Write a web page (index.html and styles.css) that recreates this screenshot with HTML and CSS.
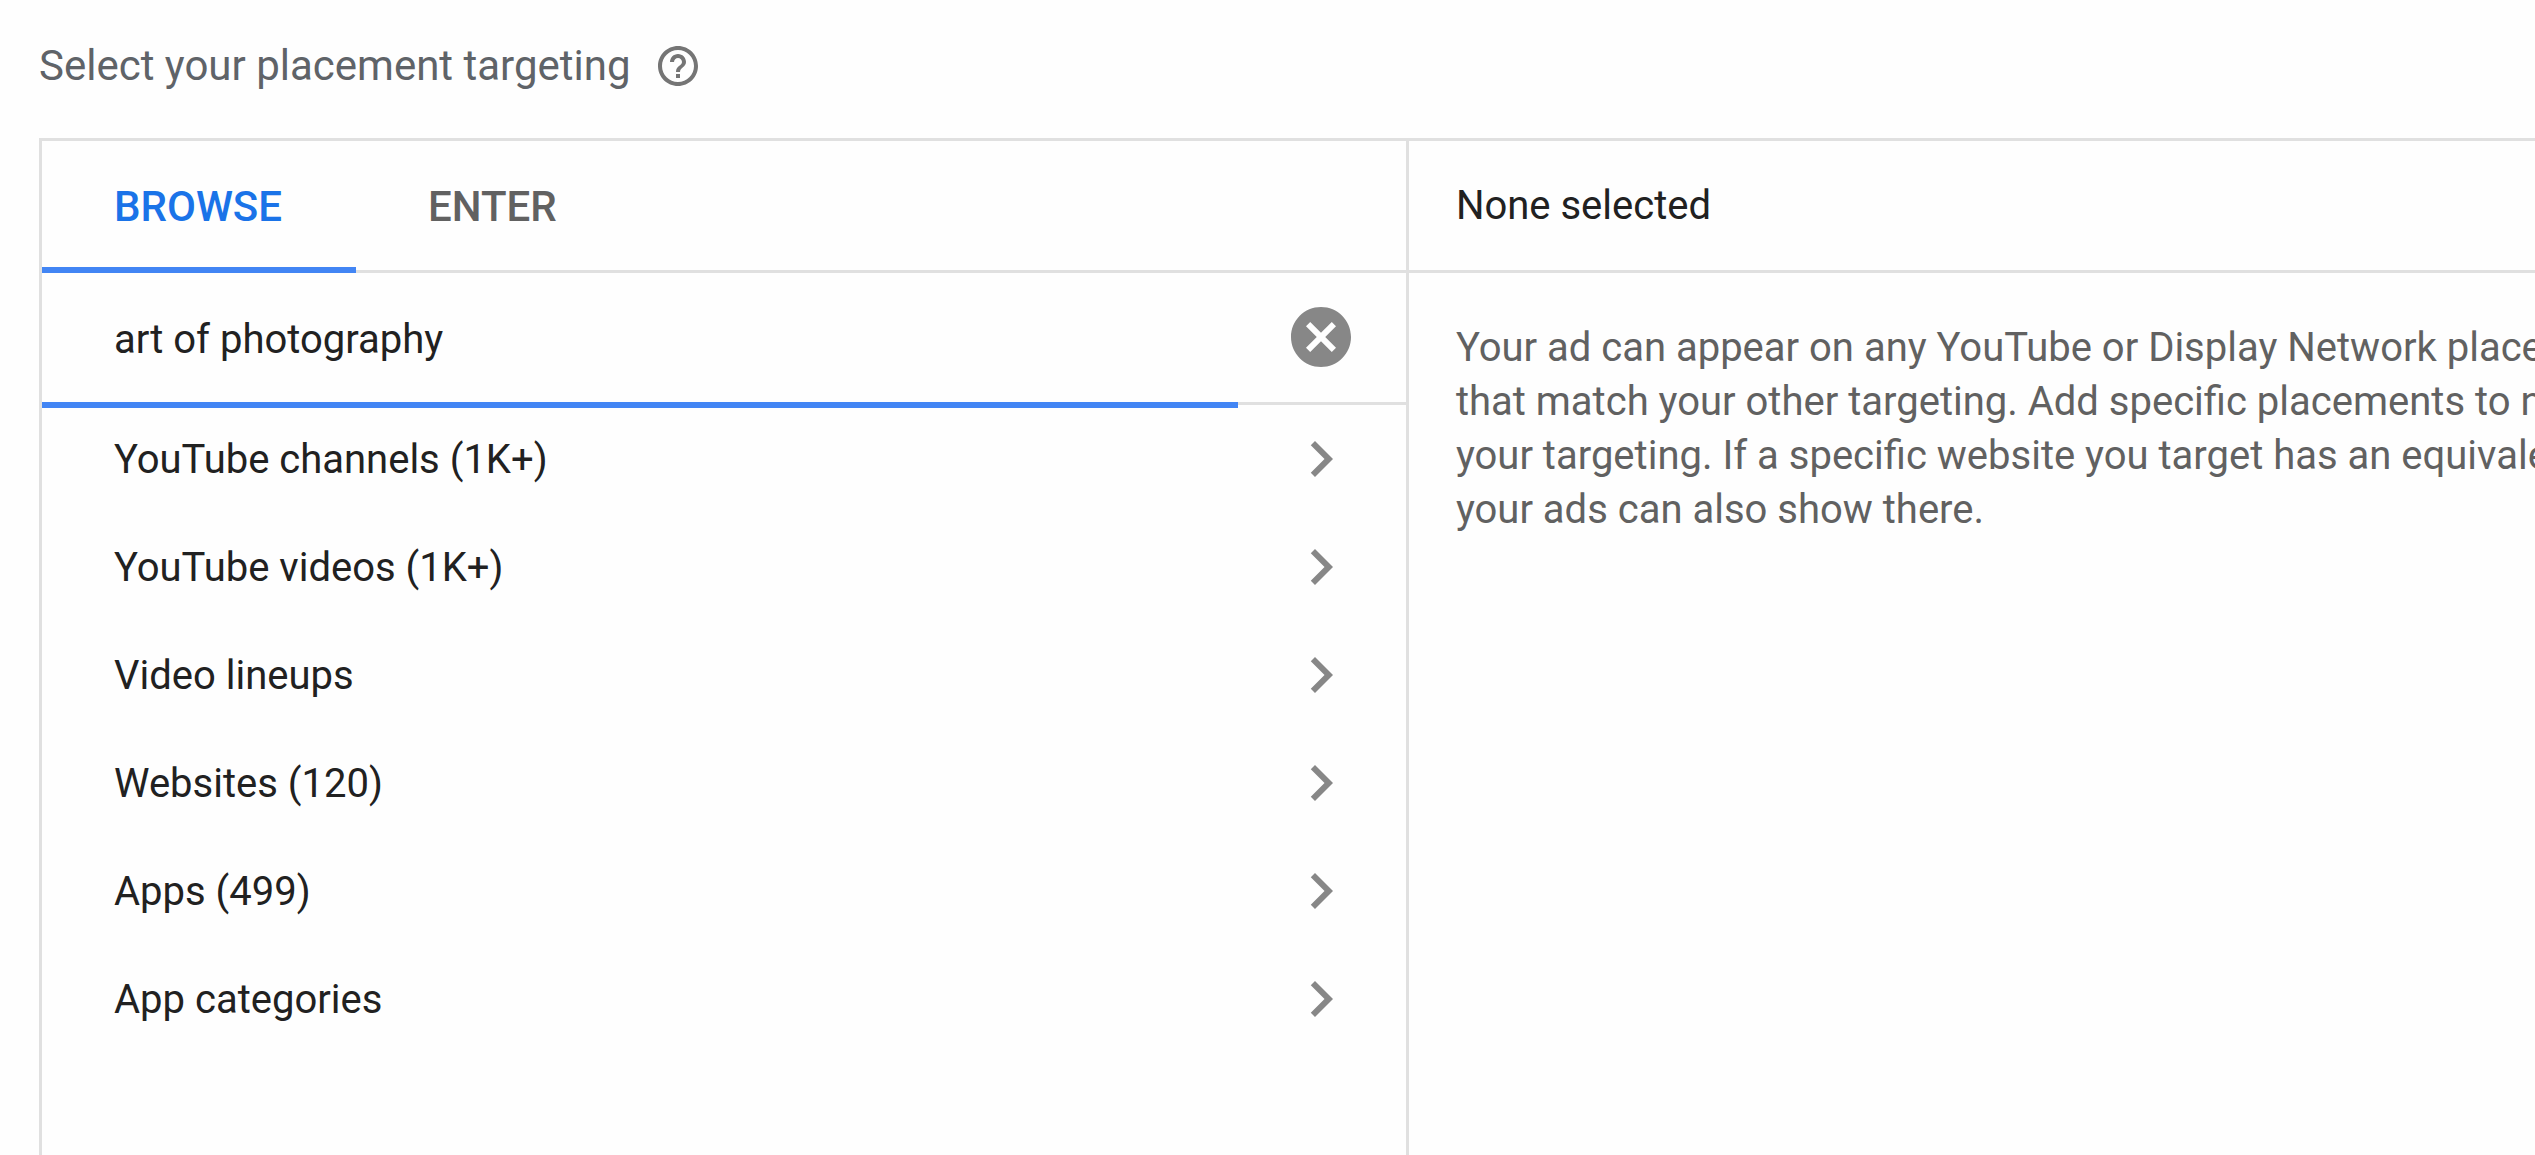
FILE: index.html
```html
<!DOCTYPE html>
<html lang="en">

<head>
    <meta charset="utf-8">
    <meta name="viewport" content="width=device-width, initial-scale=1.0">
    <title>Placement targeting</title>
    <link rel="stylesheet" href="styles.css">
</head>

<body>
    <svg class="sprite" aria-hidden="true">
        <symbol id="chevron" viewBox="0 0 24 24">
            <path d="M10 6L8.59 7.41 13.17 12l-4.58 4.59L10 18l6-6z"/>
        </symbol>
    </svg>

    <header class="title">
        <h1>Select your placement targeting</h1>
        <button class="help" type="button" aria-label="Help">
            <svg viewBox="0 0 24 24"><path d="M11 18h2v-2h-2v2zm1-16C6.48 2 2 6.48 2 12s4.480 10 10 10 10-4.480 10-10S17.520 2 12 2zm0 18c-4.410 0-8-3.590-8-8s3.590-8 8-8 8 3.590 8 8-3.590 8-8 8zm0-14c-2.210 0-4 1.790-4 4h2c0-1.100.9-2 2-2s2 .9 2 2c0 2-3 1.750-3 5h2c0-2.250 3-2.500 3-5 0-2.210-1.790-4-4-4z"/></svg>
        </button>
    </header>

    <main class="picker">
        <section class="panel">
            <nav class="tabs">
                <button class="tab active" type="button">BROWSE</button>
                <button class="tab" type="button">ENTER</button>
            </nav>

            <form class="search">
                <div class="field">
                    <input type="text" aria-label="Search placements" value="art of photography" autocomplete="off">
                </div>
                <button class="clear" type="reset" aria-label="Clear">
                    <svg viewBox="0 0 24 24"><path d="M12 2C6.470 2 2 6.470 2 12s4.470 10 10 10 10-4.470 10-10S17.530 2 12 2zm5 13.590L15.590 17 12 13.410 8.410 17 7 15.590 10.590 12 7 8.410 8.410 7 12 10.590 15.590 7 17 8.410 13.410 12 17 15.590z"/></svg>
                </button>
            </form>

            <ul class="list">
                <li><button type="button">YouTube channels (1K+)<svg><use href="#chevron"/></svg></button></li>
                <li><button type="button">YouTube videos (1K+)<svg><use href="#chevron"/></svg></button></li>
                <li><button type="button">Video lineups<svg><use href="#chevron"/></svg></button></li>
                <li><button type="button">Websites (120)<svg><use href="#chevron"/></svg></button></li>
                <li><button type="button">Apps (499)<svg><use href="#chevron"/></svg></button></li>
                <li><button type="button">App categories<svg><use href="#chevron"/></svg></button></li>
            </ul>
        </section>

        <section class="panel selected">
            <h2>None selected</h2>
            <p>Your ad can appear on any YouTube or Display Network placements<br>
            that match your other targeting. Add specific placements to narrow<br>
            your targeting. If a specific website you target has an equivalent app,<br>
            your ads can also show there.</p>
        </section>
    </main>
</body>

</html>
```

FILE: styles.css
```css
* {
    box-sizing: border-box;
}

body {
    margin: 0;
    height: 100vh;
    display: flex;
    flex-direction: column;
    overflow: hidden;
    background: #fefefe;
    color: #212121;
    font-family: Roboto, "Liberation Sans", sans-serif;
    font-size: 40px;
}

button,
input {
    margin: 0;
    padding: 0;
    border: none;
    outline: none;
    background: none;
    color: inherit;
    font: inherit;
}

svg {
    display: block;
    width: 72px;
    height: 72px;
    fill: #878787;
}

.sprite {
    display: none;
}

.title {
    display: flex;
    align-items: center;
    gap: 23px;
    height: 138px;
    padding: 0 39px 7px;
}

.title h1 {
    margin: 0;
    color: #5f6368;
    font-size: 42px;
    font-weight: 400;
}

.help svg {
    width: 48px;
    height: 48px;
    fill: #757575;
}

.picker {
    flex: 1;
    display: flex;
    margin-left: 39px;
    border-top: 3px solid #e0e0e0;
}

.panel {
    flex: none;
    width: calc(54vw - 2px);
    border-left: 3px solid #e0e0e0;
}

.tabs {
    display: flex;
    height: 132px;
    border-bottom: 3px solid #e0e0e0;
}

.tab {
    height: 132px;
    padding: 4px 74px 0 72px;
    border-bottom: 6px solid transparent;
    color: #616161;
    font-size: 42px;
    font-weight: 500;
}

.tab.active {
    border-color: #4285f4;
    color: #1a73e8;
}

.search {
    display: flex;
    height: 132px;
    border-bottom: 3px solid #e0e0e0;
}

/* the focus line hangs over the row border */
.field {
    flex: 1;
    height: 135px;
    padding-top: 3px;
    border-bottom: 6px solid #4285f4;
    z-index: 1;
}

.field input {
    width: 100%;
    height: 100%;
    padding-left: 72px;
}

.clear {
    padding: 0 49px 2px 47px;
}

.list {
    margin: 0;
    padding: 0;
    list-style: none;
}

.list button {
    display: flex;
    align-items: center;
    justify-content: space-between;
    width: 100%;
    height: 108px;
    padding: 0 49px 0 72px;
}

.selected h2 {
    height: 132px;
    margin: 0;
    padding-left: 47px;
    border-bottom: 3px solid #e0e0e0;
    font-size: 40px;
    font-weight: 400;
    line-height: 129px;
}

.selected p {
    margin: 48px 47px;
    color: #616161;
    line-height: 54px;
    white-space: nowrap;
}
```
